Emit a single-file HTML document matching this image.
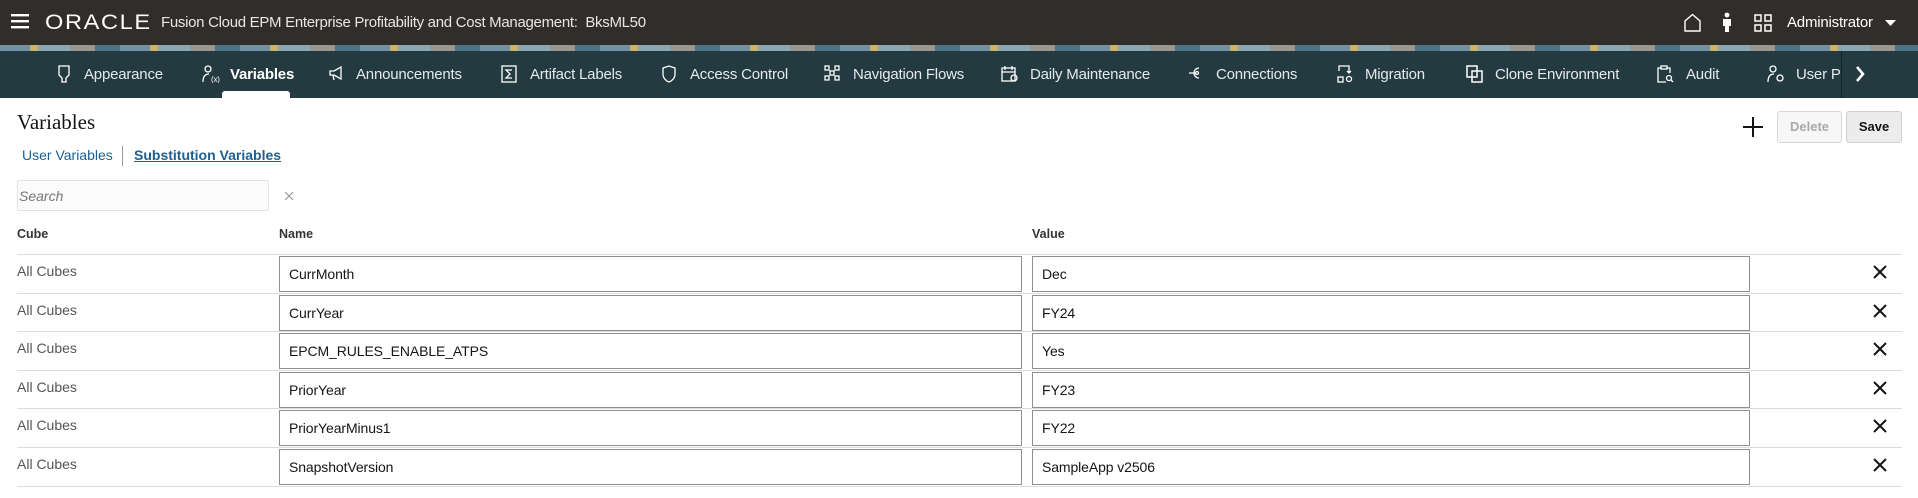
<!DOCTYPE html>
<html><head><meta charset="utf-8"><style>
*{box-sizing:border-box;margin:0;padding:0}
body{width:1918px;height:498px;overflow:hidden;background:#fff;font-family:"Liberation Sans",sans-serif;position:relative;color:#161513}
.top{position:absolute;left:0;top:0;width:1918px;height:45px;background:#312d2a;color:#fff}
.strip{position:absolute;left:0;top:45px;width:1918px;height:6px;background:repeating-linear-gradient(90deg,#6f93a3 0 30px,#c9b46a 30px 38px,#8aa7b3 38px 70px,#9a9690 70px 95px,#4e7384 95px 120px)}
.nav{position:absolute;left:0;top:51px;width:1918px;height:47px;background:#243a41;color:#fff;font-size:15px;letter-spacing:-0.2px}
.nav span{position:absolute;top:15px;white-space:nowrap}
.nav svg{position:absolute;top:14px}
.abs{position:absolute;white-space:nowrap}
.line{position:absolute;left:17px;width:1885px;height:1px;background:#dcdcdc}
.inp{position:absolute;height:36px;border:1px solid #8f8f8f;background:#fff;font-size:14px;padding:9px 0 0 9px;color:#161513;letter-spacing:-0.1px}
.cube{position:absolute;left:17px;font-size:14px;color:#555}
</style></head><body>
<div class="top">
  <svg class="abs" style="left:11px;top:14px" width="18" height="15"><rect y="0" width="18" height="2.4" fill="#fff"/><rect y="6" width="18" height="2.4" fill="#fff"/><rect y="12" width="18" height="2.4" fill="#fff"/></svg>
  <div class="abs" style="left:45px;top:11px;font-size:21px;letter-spacing:1.5px;font-weight:normal;transform:scaleX(1.12);transform-origin:left">ORACLE</div>
  <div class="abs" style="left:161px;top:14px;font-size:15px;letter-spacing:-0.3px;color:#e8e6e3">Fusion Cloud EPM Enterprise Profitability and Cost Management:&nbsp; BksML50</div>
  <svg class="abs" style="left:1683px;top:13px" width="19" height="19"><path d="M2 18V8L9.5 1.5L17 8V18Z" fill="none" stroke="#fff" stroke-width="1.4"/></svg>
  <svg class="abs" style="left:1721px;top:12px" width="12" height="21"><circle cx="6" cy="3" r="2.4" fill="#fff"/><path d="M2 7h8v7H8v6H4v-6H2Z" fill="#fff"/></svg>
  <svg class="abs" style="left:1754px;top:14px" width="18" height="18" fill="none" stroke="#fff" stroke-width="1.5"><rect x="1" y="1" width="6" height="6"/><rect x="11" y="1" width="6" height="6"/><rect x="1" y="11" width="6" height="6"/><rect x="11" y="11" width="6" height="6"/></svg>
  <div class="abs" style="left:1787px;top:14px;font-size:15px;letter-spacing:-0.2px">Administrator</div>
  <svg class="abs" style="left:1885px;top:20px" width="11" height="7"><path d="M0 0h11L5.5 6Z" fill="#fff"/></svg>
</div>
<div class="strip"></div>
<div class="nav">
  <svg style="left:57px" width="14" height="18" fill="none" stroke="#fff" stroke-width="1.3"><path d="M2 1h10v9l-3 3v4H5v-4L2 10Z"/></svg><span style="left:84px;color:#e4e9ea">Appearance</span>
  <svg style="left:202px" width="18" height="18" fill="none" stroke="#fff" stroke-width="1.3"><circle cx="6" cy="4" r="3"/><path d="M1 17c0-5 2-8 6-8"/><text x="9" y="17" font-size="8" fill="#fff" stroke="none">(x)</text></svg><span style="left:230px;font-weight:bold">Variables</span>
  <div class="abs" style="left:222px;top:40px;width:68px;height:7px;background:#fff;border-radius:3px 3px 0 0"></div>
  <svg style="left:328px" width="16" height="16" fill="none" stroke="#fff" stroke-width="1.3"><path d="M2 6h4l7-4v12l-7-4H2ZM5 10l1 5"/></svg><span style="left:356px;color:#e4e9ea">Announcements</span>
  <svg style="left:501px" width="16" height="18" fill="none" stroke="#fff" stroke-width="1.3"><rect x="1" y="1" width="14" height="16"/><path d="M11 5H5l4 4-4 4h6"/></svg><span style="left:530px;color:#e4e9ea">Artifact Labels</span>
  <svg style="left:662px" width="14" height="18" fill="none" stroke="#fff" stroke-width="1.3"><path d="M7 1L1 3v6c0 4 3 7 6 8 3-1 6-4 6-8V3Z"/></svg><span style="left:690px;color:#e4e9ea">Access Control</span>
  <svg style="left:824px" width="16" height="16" fill="none" stroke="#fff" stroke-width="1.3"><rect x="1" y="1" width="4" height="4"/><rect x="11" y="1" width="4" height="4"/><rect x="1" y="11" width="4" height="4"/><rect x="11" y="11" width="4" height="4"/><rect x="6" y="6" width="4" height="4"/></svg><span style="left:853px;color:#e4e9ea">Navigation Flows</span>
  <svg style="left:1001px" width="17" height="18" fill="none" stroke="#fff" stroke-width="1.3"><rect x="1" y="3" width="13" height="13"/><path d="M4 1v4M11 1v4M1 7h13"/><circle cx="13" cy="13" r="3"/></svg><span style="left:1030px;color:#e4e9ea">Daily Maintenance</span>
  <svg style="left:1188px" width="17" height="16" fill="none" stroke="#fff" stroke-width="1.3"><path d="M11 3a5 5 0 1 0 0 10M1 8h6"/><circle cx="9" cy="8" r="1.5"/></svg><span style="left:1216px;color:#e4e9ea">Connections</span>
  <svg style="left:1337px" width="16" height="18" fill="none" stroke="#fff" stroke-width="1.3"><path d="M2 6V1h10v7M10 6l2 2 2-2"/><rect x="1" y="12" width="5" height="5"/><circle cx="12" cy="14" r="2.5"/></svg><span style="left:1365px;color:#e4e9ea">Migration</span>
  <svg style="left:1466px" width="17" height="18" fill="none" stroke="#fff" stroke-width="1.5"><rect x="1" y="1" width="10" height="11"/><rect x="6" y="6" width="10" height="11"/></svg><span style="left:1495px;color:#e4e9ea">Clone Environment</span>
  <svg style="left:1657px" width="17" height="19" fill="none" stroke="#fff" stroke-width="1.3"><path d="M9 17H1V3h3M10 3h3v5"/><rect x="4" y="1" width="6" height="3"/><circle cx="12" cy="13" r="2.5"/><path d="M14 15l2 2"/></svg><span style="left:1686px;color:#e4e9ea">Audit</span>
  <svg style="left:1767px" width="18" height="18" fill="none" stroke="#fff" stroke-width="1.3"><circle cx="6" cy="4" r="3"/><path d="M1 17c0-5 2-8 6-8"/><circle cx="13" cy="13" r="3"/></svg>
  <div class="abs" style="left:1796px;top:15px;width:45px;overflow:hidden;color:#e4e9ea">User Preferences</div>
  <div class="abs" style="left:1841px;top:0;width:1px;height:47px;background:#12232a"></div>
  <svg style="left:1854px;top:14px" width="12" height="18"><path d="M3 2l6 7-6 7" fill="none" stroke="#fff" stroke-width="2.6"/></svg>
</div>
<div class="abs" style="left:17px;top:110px;font-family:'Liberation Serif',serif;font-size:21px;color:#161513">Variables</div>
<div class="abs" style="left:22px;top:147px;font-size:14px;color:#1d5f8e">User Variables</div>
<div class="abs" style="left:122px;top:146px;width:1px;height:20px;background:#999"></div>
<div class="abs" style="left:134px;top:147px;font-size:14px;color:#1d5f8e;font-weight:bold;text-decoration:underline">Substitution Variables</div>
<svg class="abs" style="left:1742px;top:116px" width="22" height="22"><path d="M11 1v20M1 11h20" stroke="#161513" stroke-width="2"/></svg>
<div class="abs" style="left:1777px;top:111px;width:65px;height:32px;border:1px solid #d8d8d8;border-radius:3px;background:#f7f7f7;color:#aaa;font-size:13px;font-weight:bold;text-align:center;line-height:30px">Delete</div>
<div class="abs" style="left:1846px;top:111px;width:56px;height:32px;border:1px solid #cfcfcf;border-radius:3px;background:#ececec;color:#161513;font-size:13px;font-weight:bold;text-align:center;line-height:30px">Save</div>
<div class="abs" style="left:17px;top:180px;width:252px;height:31px;border:1px solid #e3e3e3;border-radius:2px;background:#fbfbfb;font-size:14px;color:#777;font-style:italic;padding:7px 0 0 1px">Search</div>
<svg class="abs" style="left:284px;top:191px" width="10" height="10"><path d="M1 1l8 8M9 1L1 9" stroke="#999" stroke-width="1.2"/></svg>
<div class="abs" style="left:17px;top:227px;font-size:12.5px;font-weight:bold;color:#333">Cube</div>
<div class="abs" style="left:279px;top:227px;font-size:12.5px;font-weight:bold;color:#333">Name</div>
<div class="abs" style="left:1032px;top:227px;font-size:12.5px;font-weight:bold;color:#333">Value</div>

<div class="line" style="top:254px"></div>
<div class="cube" style="top:263px">All Cubes</div><div class="inp" style="left:279px;top:256px;width:743px">CurrMonth</div><div class="inp" style="left:1032px;top:256px;width:718px">Dec</div>
<div class="line" style="top:293px"></div>
<div class="cube" style="top:302px">All Cubes</div><div class="inp" style="left:279px;top:295px;width:743px">CurrYear</div><div class="inp" style="left:1032px;top:295px;width:718px">FY24</div>
<div class="line" style="top:331px"></div>
<div class="cube" style="top:340px">All Cubes</div><div class="inp" style="left:279px;top:333px;width:743px">EPCM_RULES_ENABLE_ATPS</div><div class="inp" style="left:1032px;top:333px;width:718px">Yes</div>
<div class="line" style="top:370px"></div>
<div class="cube" style="top:379px">All Cubes</div><div class="inp" style="left:279px;top:372px;width:743px">PriorYear</div><div class="inp" style="left:1032px;top:372px;width:718px">FY23</div>
<div class="line" style="top:408px"></div>
<div class="cube" style="top:417px">All Cubes</div><div class="inp" style="left:279px;top:410px;width:743px">PriorYearMinus1</div><div class="inp" style="left:1032px;top:410px;width:718px">FY22</div>
<div class="line" style="top:447px"></div>
<div class="cube" style="top:456px">All Cubes</div><div class="inp" style="left:279px;top:449px;width:743px">SnapshotVersion</div><div class="inp" style="left:1032px;top:449px;width:718px">SampleApp v2506</div>
<div class="line" style="top:486px"></div>

<svg class="abs" style="left:1873px;top:265px" width="14" height="14"><path d="M1 1l12 12M13 1L1 13" stroke="#161513" stroke-width="2"/></svg>
<svg class="abs" style="left:1873px;top:304px" width="14" height="14"><path d="M1 1l12 12M13 1L1 13" stroke="#161513" stroke-width="2"/></svg>
<svg class="abs" style="left:1873px;top:342px" width="14" height="14"><path d="M1 1l12 12M13 1L1 13" stroke="#161513" stroke-width="2"/></svg>
<svg class="abs" style="left:1873px;top:381px" width="14" height="14"><path d="M1 1l12 12M13 1L1 13" stroke="#161513" stroke-width="2"/></svg>
<svg class="abs" style="left:1873px;top:419px" width="14" height="14"><path d="M1 1l12 12M13 1L1 13" stroke="#161513" stroke-width="2"/></svg>
<svg class="abs" style="left:1873px;top:458px" width="14" height="14"><path d="M1 1l12 12M13 1L1 13" stroke="#161513" stroke-width="2"/></svg>
</body></html>
